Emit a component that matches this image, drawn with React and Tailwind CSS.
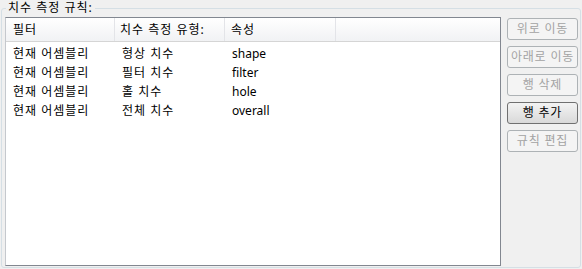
const rules = [
  { filter: '현재 어셈블리', type: '형상 치수', prop: 'shape' },
  { filter: '현재 어셈블리', type: '필터 치수', prop: 'filter' },
  { filter: '현재 어셈블리', type: '홀 치수', prop: 'hole' },
  { filter: '현재 어셈블리', type: '전체 치수', prop: 'overall' },
];

const buttons = [
  { label: '위로 이동', enabled: false },
  { label: '아래로 이동', enabled: false },
  { label: '행 삭제', enabled: false },
  { label: '행 추가', enabled: true },
  { label: '규칙 편집', enabled: false },
];

const HeaderCell = ({ children, className = '' }) => (
  <div className={`h-[23px] flex items-center border-r border-r-[#e3e4e8] tracking-[1px] ${className}`}>
    {children}
  </div>
);

const SideButton = ({ label, enabled }) => (
  <button
    className={`h-[22px] w-[71px] rounded-[3px] border flex items-center justify-center leading-none tracking-[0.8px] ${
      enabled
        ? 'border-[#707070] bg-gradient-to-b from-[#f3f3f3] to-[#d9d9d9] text-black'
        : 'border-[#adb2b5] bg-[#f4f4f4] text-[#a3a3a3]'
    }`}
  >
    {label}
  </button>
);

export default function App() {
  return (
    <div className="w-[582px] h-[269px] bg-[#f0f0f0] pt-[8px] px-px text-[12px] text-black font-['Noto_Sans','Noto_Sans_CJK_KR',sans-serif]">
      <div className="relative h-[260px] border border-[#d5dfe5] rounded-[3px] pt-[8px] pl-[3px] pr-[2px] pb-px flex gap-[6px]">
        <span className="absolute left-[4px] -top-[9px] px-[2px] bg-[#f0f0f0] leading-[16px] tracking-[1px]">치수 측정 규칙:</span>

        <div className="w-[496px] h-[249px] bg-white border border-[#828790] border-l-[#c5c8cd]">
          <div className="grid grid-cols-[109px_110px_111px_1fr] bg-gradient-to-b from-white to-[#f1f2f4] border-b border-b-[#d5d5d5]">
            <HeaderCell className="pl-[7px]">필터</HeaderCell>
            <HeaderCell className="pl-[5px]">치수 측정 유형:</HeaderCell>
            <HeaderCell className="pl-[6px]">속성</HeaderCell>
            <HeaderCell className="border-r-0" />
          </div>
          <div className="pt-[2px]">
            {rules.map((r, i) => (
              <div key={i} className="grid grid-cols-[109px_110px_111px_1fr] h-[19px] items-center">
                <span className="pl-[7px] tracking-[1px]">{r.filter}</span>
                <span className="pl-[7px] tracking-[1px]">{r.type}</span>
                <span className="pl-[7px]">{r.prop}</span>
                <span />
              </div>
            ))}
          </div>
        </div>

        <div className="flex flex-col gap-[6px] pt-px">
          {buttons.map((b) => (
            <SideButton key={b.label} label={b.label} enabled={b.enabled} />
          ))}
        </div>
      </div>
    </div>
  );
}
